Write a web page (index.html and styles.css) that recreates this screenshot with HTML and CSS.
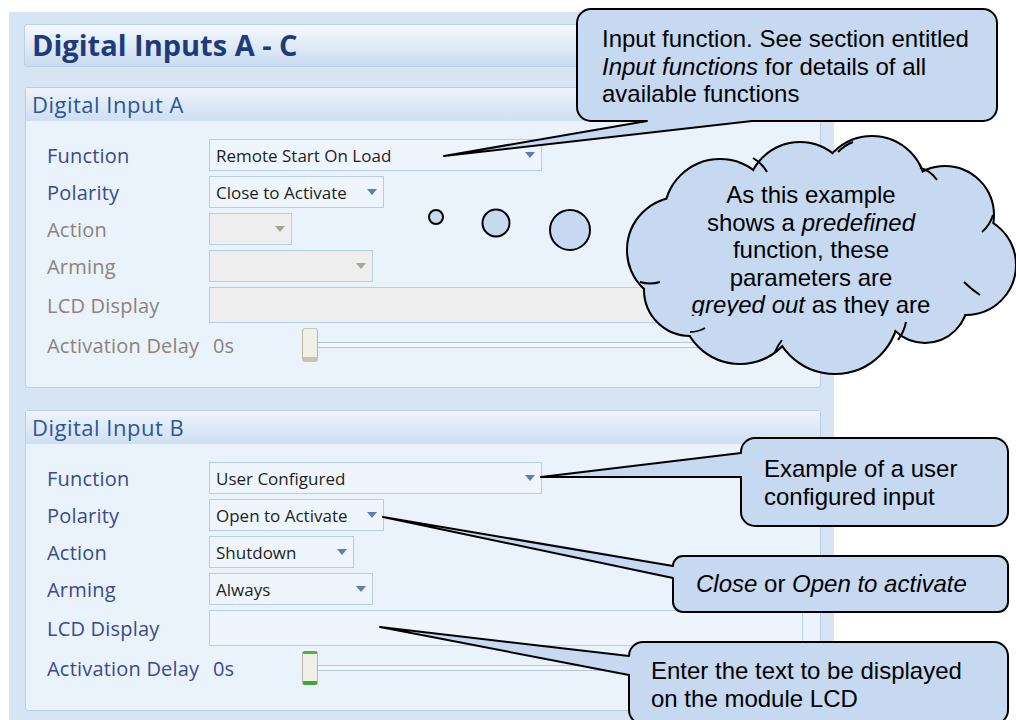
FILE: index.html
```html
<!DOCTYPE html>
<html lang="en">
<head>
  <meta charset="UTF-8" />
  <meta name="viewport" content="width=device-width, initial-scale=1.0"/>
  <title>Digital Inputs A - C</title>
  <link rel="stylesheet" href="styles.css">
</head>
<body>
  <div class="page">
    <div class="config">
      <div class="title-bar">Digital Inputs A - C</div>

      <div class="section">
        <div class="section-head">Digital Input A</div>
        <div class="section-body">
          <div class="row">
            <span class="label">Function</span>
            <div class="select w-function"><span>Remote Start On Load</span><i class="arrow"></i></div>
          </div>
          <div class="row">
            <span class="label">Polarity</span>
            <div class="select w-polarity"><span>Close to Activate</span><i class="arrow"></i></div>
          </div>
          <div class="row">
            <span class="label off">Action</span>
            <div class="select off w-action-a"><span></span><i class="arrow"></i></div>
          </div>
          <div class="row">
            <span class="label off">Arming</span>
            <div class="select off w-arming"><span></span><i class="arrow"></i></div>
          </div>
          <div class="row row-lcd">
            <span class="label off">LCD Display</span>
            <div class="text-box off"></div>
          </div>
          <div class="row row-delay">
            <span class="label label-delay off">Activation Delay</span>
            <span class="delay-value off">0s</span>
            <div class="slider">
              <div class="thumb off"></div>
              <div class="track"></div>
            </div>
          </div>
        </div>
      </div>

      <div class="section">
        <div class="section-head">Digital Input B</div>
        <div class="section-body">
          <div class="row">
            <span class="label">Function</span>
            <div class="select w-function"><span>User Configured</span><i class="arrow"></i></div>
          </div>
          <div class="row">
            <span class="label">Polarity</span>
            <div class="select w-polarity"><span>Open to Activate</span><i class="arrow"></i></div>
          </div>
          <div class="row">
            <span class="label">Action</span>
            <div class="select w-action-b"><span>Shutdown</span><i class="arrow"></i></div>
          </div>
          <div class="row">
            <span class="label">Arming</span>
            <div class="select w-arming"><span>Always</span><i class="arrow"></i></div>
          </div>
          <div class="row row-lcd">
            <span class="label">LCD Display</span>
            <div class="text-box"></div>
          </div>
          <div class="row row-delay">
            <span class="label label-delay">Activation Delay</span>
            <span class="delay-value">0s</span>
            <div class="slider">
              <div class="thumb"></div>
              <div class="track"></div>
            </div>
          </div>
        </div>
      </div>
    </div>

    <!-- annotation shapes drawn over the screen -->
    <svg class="notes" width="1016" height="720" viewBox="0 0 1016 720">
      <path class="callout" d="M591 9 H983 A14 14 0 0 1 997 23 V107 A14 14 0 0 1 983 121 H752 L444 156 L647 121 H591 A14 14 0 0 1 577 107 V23 A14 14 0 0 1 591 9 Z"/>

      <circle class="callout" cx="436" cy="217" r="7"/>
      <circle class="callout" cx="496" cy="223" r="13.5"/>
      <circle class="callout" cx="570" cy="230" r="20"/>

      <g class="cloud-line">
        <circle cx="720" cy="215" r="55"/>
        <circle cx="800" cy="195" r="52"/>
        <circle cx="872" cy="190" r="53"/>
        <circle cx="945" cy="215" r="48"/>
        <circle cx="966" cy="265" r="49"/>
        <circle cx="925" cy="300" r="42"/>
        <circle cx="835" cy="310" r="63"/>
        <circle cx="740" cy="305" r="58"/>
        <circle cx="690" cy="290" r="45"/>
        <circle cx="680" cy="250" r="52"/>
      </g>
      <g class="cloud-fill">
        <circle cx="720" cy="215" r="55"/>
        <circle cx="800" cy="195" r="52"/>
        <circle cx="872" cy="190" r="53"/>
        <circle cx="945" cy="215" r="48"/>
        <circle cx="966" cy="265" r="49"/>
        <circle cx="925" cy="300" r="42"/>
        <circle cx="835" cy="310" r="63"/>
        <circle cx="740" cy="305" r="58"/>
        <circle cx="690" cy="290" r="45"/>
        <circle cx="680" cy="250" r="52"/>
        <circle cx="820" cy="255" r="90"/>
        <circle cx="905" cy="255" r="55"/>
        <circle cx="745" cy="255" r="60"/>
      </g>
      <g class="cloud-crease">
        <path d="M753 158 Q762 163 767 172"/>
        <path d="M838 152 Q845 145 853 142"/>
        <path d="M920 168 Q930 170 937 180"/>
        <path d="M993 215 Q990 225 982 232"/>
        <path d="M980 295 Q972 290 964 282"/>
        <path d="M898 340 Q904 332 906 322"/>
        <path d="M775 352 Q778 345 782 340"/>
        <path d="M690 332 Q698 332 705 328"/>
        <path d="M640 282 Q650 285 660 282"/>
      </g>

      <path class="callout" d="M755 438 H994 A14 14 0 0 1 1008 452 V512 A14 14 0 0 1 994 526 H755 A14 14 0 0 1 741 512 V477 L541 477 L741 453 V452 A14 14 0 0 1 755 438 Z"/>
      <path class="callout" d="M683 556 H998 A10 10 0 0 1 1008 566 V602 A10 10 0 0 1 998 612 H683 A10 10 0 0 1 673 602 V578 L383 517 L673 566 A10 10 0 0 1 683 556 Z"/>
      <path class="callout" d="M643 642 H994 A14 14 0 0 1 1008 656 V710 A14 14 0 0 1 994 724 H643 A14 14 0 0 1 629 710 V675 L380 627 L629 656 A14 14 0 0 1 643 642 Z"/>
    </svg>

    <div class="note note-function">Input function. See section entitled<br><em>Input functions</em> for details of all<br>available functions</div>
    <div class="note note-cloud">As this example<br>shows a <em>predefined</em><br>function, these<br>parameters are<br><em>greyed out</em> as they are</div>
    <div class="note note-user">Example of a user<br>configured input</div>
    <div class="note note-polarity"><em>Close</em> or <em>Open to activate</em></div>
    <div class="note note-lcd">Enter the text to be displayed<br>on the module LCD</div>
  </div>
</body>
</html>
```

FILE: styles.css
```css
* {
  box-sizing: border-box;
}

body {
  margin: 0;
  background: #ffffff;
  font-family: "Open Sans", sans-serif;
}

.page {
  position: relative;
  width: 1016px;
  height: 720px;
  overflow: hidden;
}

.config {
  margin: 12px 0 0 9px;
  width: 825px;
  height: 708px;
  padding: 12px 12px 0 15px;
  background: #d6e4f3;
}

.title-bar {
  height: 43px;
  padding-left: 7px;
  border: 1px solid #bccfe6;
  border-radius: 3px;
  background: linear-gradient(#f5f9fd, #c9dcf0);
  color: #1f3b7c;
  font-size: 29px;
  font-weight: 700;
  line-height: 40px;
}

.section {
  width: 796px;
  margin: 20px 0 0 1px;
  border: 1px solid #b9cde5;
  border-radius: 3px;
  background: #eaf2fb;
}

.section + .section {
  margin-top: 22px;
}

.section-head {
  height: 33px;
  padding-left: 6px;
  background: linear-gradient(#eef4fb, #cedff2);
  color: #2d5697;
  font-size: 22px;
  letter-spacing: 0.5px;
  line-height: 33px;
}

.section-body {
  display: flex;
  flex-direction: column;
  gap: 5px;
  padding: 18px 0 25px 21px;
}

.row {
  display: flex;
  align-items: center;
  height: 32px;
}

.row-lcd {
  height: 36px;
}

.row-delay {
  height: 34px;
}

.label {
  width: 162px;
  color: #3a4a8c;
  font-size: 20px;
  letter-spacing: 0.2px;
}

.label.off,
.delay-value.off {
  color: #8b847a;
}

.label-delay {
  width: 166px;
}

.delay-value {
  width: 89px;
  color: #3a4a8c;
  font-size: 20px;
}

.select {
  display: flex;
  align-items: center;
  height: 32px;
  padding: 0 6px 0 6px;
  border: 1px solid #b7cce6;
  background: #eef5fd;
  color: #1e1e22;
  font-size: 17px;
}

.select.off {
  background: #eeeeee;
}

.arrow {
  margin-left: auto;
  border-left: 5px solid transparent;
  border-right: 5px solid transparent;
  border-top: 6px solid #5a7db4;
}

.select.off .arrow {
  border-top-color: #a9a59b;
}

.w-function { width: 333px; }
.w-polarity { width: 175px; }
.w-action-a { width: 83px; }
.w-action-b { width: 145px; }
.w-arming { width: 164px; }

.text-box {
  width: 594px;
  height: 36px;
  border: 1px solid #b7cce6;
  background: #eef5fd;
}

.text-box.off {
  background: #eeeeee;
}

.slider {
  display: flex;
  align-items: center;
  width: 501px;
}

.thumb {
  width: 16px;
  height: 34px;
  border: 1px solid #b9b6aa;
  border-top: 3px solid #4cb43c;
  border-bottom: 4px solid #3fa832;
  border-radius: 3px;
  background: #eff0ea;
}

.thumb.off {
  border-top: 1px solid #c9c5b7;
  border-bottom: 5px solid #c8c3b3;
  background: #f1f0e7;
}

.track {
  flex: 1;
  height: 6px;
  border-top: 1px solid #b4c6de;
  border-bottom: 1px solid #b4c6de;
  background: #f3f7fc;
}

/* annotations */

.notes {
  position: absolute;
  top: 0;
  left: 0;
}

.callout {
  fill: #c6d9f1;
  stroke: #000000;
  stroke-width: 2;
  stroke-linejoin: round;
}

.cloud-line circle {
  fill: none;
  stroke: #000000;
  stroke-width: 4;
}

.cloud-fill circle {
  fill: #c6d9f1;
}

.cloud-crease path {
  fill: none;
  stroke: #000000;
  stroke-width: 2;
}

.note {
  position: absolute;
  color: #000000;
  font-family: "Liberation Sans", Arial, sans-serif;
  font-size: 24px;
  line-height: 27.5px;
}

.note em {
  font-style: italic;
}

.note-function {
  top: 25px;
  left: 602px;
}

.note-cloud {
  top: 181px;
  left: 686px;
  width: 250px;
  height: 135px;
  overflow: hidden;
  text-align: center;
}

.note-user {
  top: 455px;
  left: 764px;
}

.note-polarity {
  top: 570px;
  left: 696px;
}

.note-lcd {
  top: 657px;
  left: 651px;
}
```
